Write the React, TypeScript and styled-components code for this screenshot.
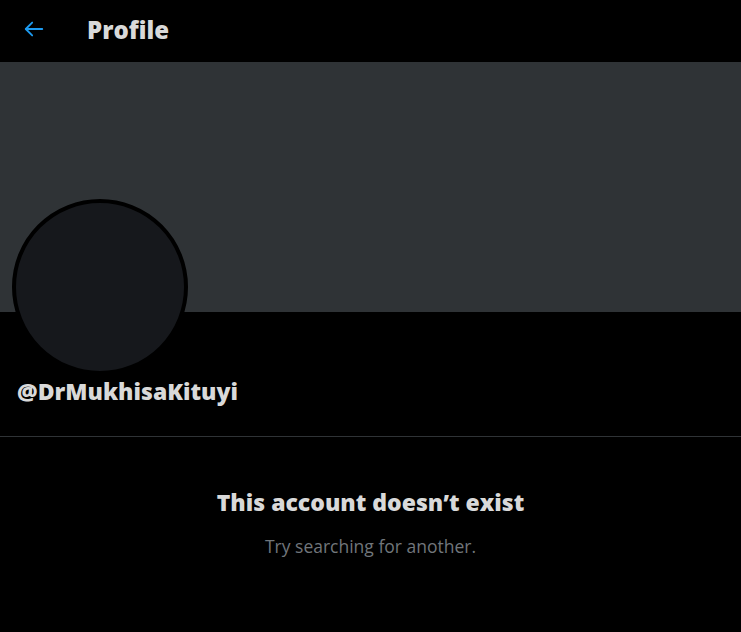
import React from "react";
import styled, { createGlobalStyle } from "styled-components";

const Global = createGlobalStyle`
  html, body { margin: 0; padding: 0; background: #000; }
  body { font-family: "Open Sans", "Noto Sans", sans-serif; color: #e7e9ea; }
`;

const Page = styled.div`
  width: 741px;
  min-height: 632px;
  background: #000;
  display: flex;
  flex-direction: column;
`;

const Header = styled.header`
  height: 62px;
  display: flex;
  align-items: center;
  padding-left: 23px;
  padding-bottom: 4px;
  gap: 42px;
  box-sizing: border-box;
`;

const BackButton = styled.button`
  background: none;
  border: 0;
  padding: 0;
  width: 22px;
  height: 22px;
  display: flex;
  align-items: center;
  justify-content: center;
  color: #1d9bf0;
  cursor: pointer;
`;

const Title = styled.h1`
  margin: 0;
  font-size: 24px;
  font-weight: 800;
  color: #d9d9d9;
`;

const Banner = styled.div`
  height: 250px;
  background: #2f3336;
`;

const ProfileArea = styled.div`
  display: flex;
  flex-direction: column;
  padding: 0 12px;
  border-bottom: 1px solid #2f3336;
  height: 124px;
`;

const Avatar = styled.div`
  width: 176px;
  height: 176px;
  margin-top: -113px;
  border-radius: 50%;
  border: 4px solid #000;
  box-sizing: border-box;
  background: #16181c;
`;

const Handle = styled.div`
  margin-top: 0px;
  padding-left: 5px;
  font-size: 23px;
  font-weight: 800;
  color: #d9d9d9;
`;

const Empty = styled.section`
  display: flex;
  flex-direction: column;
  align-items: center;
  padding-top: 49px;
`;

const EmptyTitle = styled.h2`
  margin: 0;
  font-size: 23px;
  font-weight: 800;
  color: #d9d9d9;
`;

const EmptyText = styled.p`
  margin: 16px 0 0;
  font-size: 17.5px;
  color: #71767b;
`;

export default function App() {
  return (
    <Page>
      <Global />
      <Header>
        <BackButton aria-label="Back">
          <svg width="22" height="22" viewBox="0 0 24 24" fill="none" stroke="currentColor" strokeWidth="2" strokeLinecap="round" strokeLinejoin="round">
            <path d="M21 12H3.5" />
            <path d="M10 5l-7 7 7 7" />
          </svg>
        </BackButton>
        <Title>Profile</Title>
      </Header>
      <Banner />
      <ProfileArea>
        <Avatar />
        <Handle>@DrMukhisaKituyi</Handle>
      </ProfileArea>
      <Empty>
        <EmptyTitle>This account doesn’t exist</EmptyTitle>
        <EmptyText>Try searching for another.</EmptyText>
      </Empty>
    </Page>
  );
}
